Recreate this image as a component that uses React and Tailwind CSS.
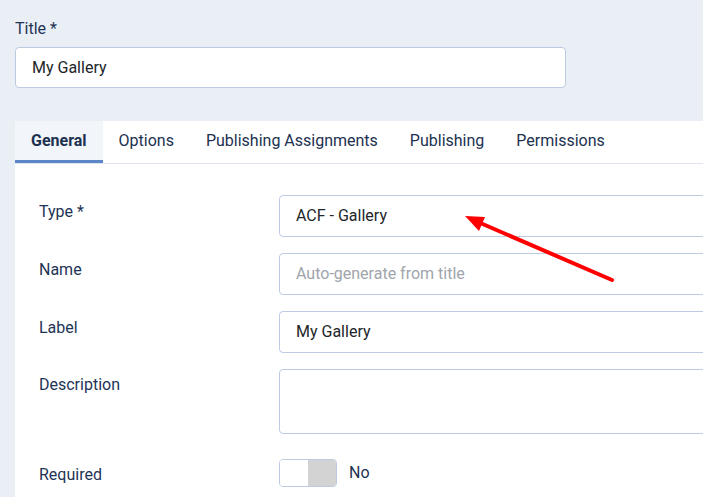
export default function App() {
  const tabs = ["General", "Options", "Publishing Assignments", "Publishing", "Permissions"];

  return (
    <div className="relative h-[497px] w-[703px] overflow-hidden bg-[#eaeff5] font-['Roboto',sans-serif]">
      <div className="px-[15px] pt-[17px]">
        <label className="block text-[16px] leading-6 text-[#1e3456]">Title *</label>
        <div className="mt-[6px] flex h-[41px] w-[551px] items-center rounded-[4px] border border-[#bccbe2] bg-white px-[16px] text-[16px] text-[#22262a]">
          My Gallery
        </div>
      </div>

      <div className="ml-[15px] mt-[33px] min-h-[420px] w-[900px] bg-white">
        <div className="flex border-b border-[#dfe6f0]">
          {tabs.map((t, i) => (
            <div
              key={t}
              className={
                i === 0
                  ? "flex h-[42px] items-center border-b-[3px] border-[#5a86c5] bg-[#f2f5f9] px-4 text-[16px] font-bold text-[#1c3150]"
                  : "flex h-[42px] items-center border-b-[3px] border-transparent px-4 text-[16px] text-[#1c3150]"
              }
            >
              {t}
            </div>
          ))}
        </div>

        <div className="grid grid-cols-[240px_1fr] gap-y-4 pl-6 pt-[31px] text-[16px]">
          <div className="pt-[5px] leading-6 text-[#1e3456]">Type *</div>
          <div className="flex h-[42px] items-center rounded-[4px] border border-[#bccbe2] px-4 text-[#22262a]">ACF - Gallery</div>

          <div className="pt-[5px] leading-6 text-[#1e3456]">Name</div>
          <div className="flex h-[42px] items-center rounded-[4px] border border-[#bccbe2] px-4 text-[#a0a5ab]">Auto-generate from title</div>

          <div className="pt-[5px] leading-6 text-[#1e3456]">Label</div>
          <div className="flex h-[42px] items-center rounded-[4px] border border-[#bccbe2] px-4 text-[#22262a]">My Gallery</div>

          <div className="pt-[4px] leading-6 text-[#1e3456]">Description</div>
          <div className="h-[65px] rounded-[4px] border border-[#bccbe2]"></div>

          <div className="mt-2 pt-[5px] leading-6 text-[#1e3456]">Required</div>
          <div className="mt-2 flex items-center">
            <div className="flex h-[28px] w-[58px] overflow-hidden rounded-[4px] border border-[#bccbe2]">
              <div className="w-[28px] bg-white"></div>
              <div className="flex-1 bg-[#d3d3d3]"></div>
            </div>
            <span className="ml-3 text-[#1c3150]">No</span>
          </div>
        </div>
      </div>

      <svg className="absolute left-0 top-0" width="703" height="497">
        <line x1="612" y1="280" x2="478" y2="222" stroke="#ff0000" strokeWidth="4" strokeLinecap="round" />
        <polygon points="465,216 485,217 479,231" fill="#ff0000" />
      </svg>
    </div>
  );
}
